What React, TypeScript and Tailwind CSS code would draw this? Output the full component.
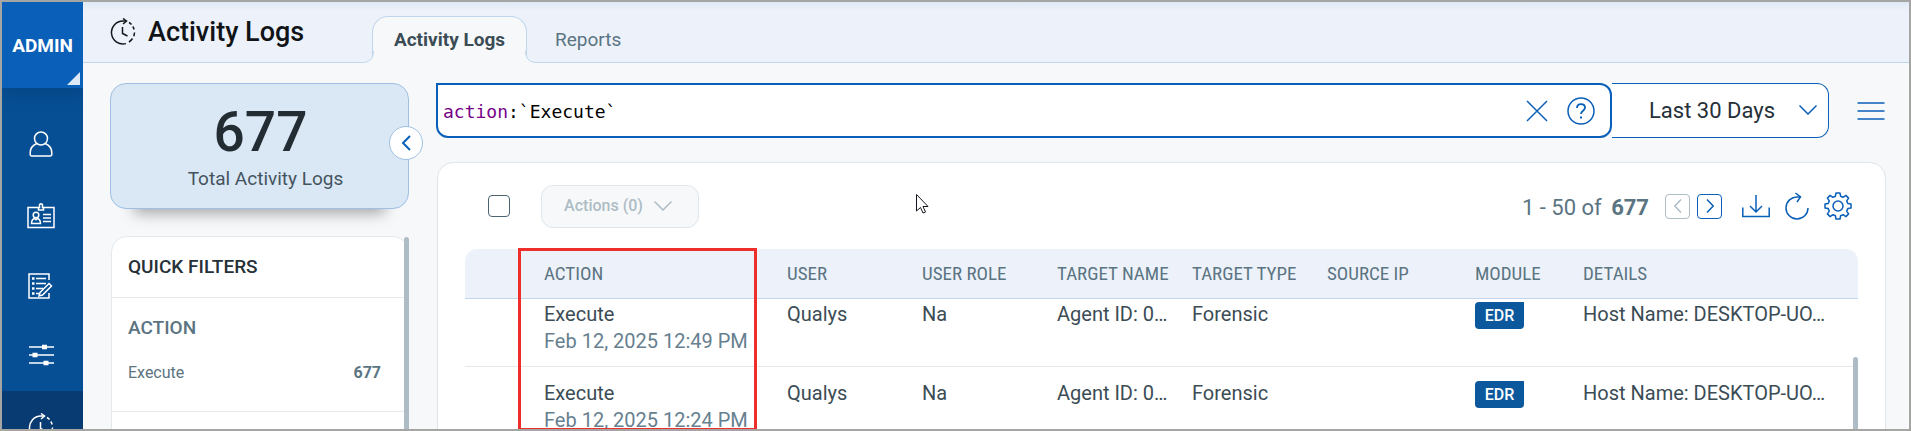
import React, { useState } from 'react';

const columns = [
  { name: '', width: 'w-[79px]' },
  { name: 'ACTION', width: 'w-[243px]' },
  { name: 'USER', width: 'w-[135px]' },
  { name: 'USER ROLE', width: 'w-[135px]' },
  { name: 'TARGET NAME', width: 'w-[135px]' },
  { name: 'TARGET TYPE', width: 'w-[135px]' },
  { name: 'SOURCE IP', width: 'w-[148px]' },
  { name: 'MODULE', width: 'w-[108px]' },
  { name: 'DETAILS', width: '' },
];

const logs = [
  { id: 1, action: 'Execute', date: 'Feb 12, 2025 12:49 PM', user: 'Qualys', role: 'Na', target: 'Agent ID: 0…', type: 'Forensic', module: 'EDR', details: 'Host Name: DESKTOP-UO…' },
  { id: 2, action: 'Execute', date: 'Feb 12, 2025 12:24 PM', user: 'Qualys', role: 'Na', target: 'Agent ID: 0…', type: 'Forensic', module: 'EDR', details: 'Host Name: DESKTOP-UO…' },
];

const Icon: React.FC<{ className?: string; children: React.ReactNode }> = ({ className = 'size-7', children }) => (
  <svg viewBox="0 0 28 28" fill="none" stroke="currentColor" strokeWidth="1.5" className={`shrink-0 ${className}`} aria-hidden="true">
    {children}
  </svg>
);

const HistoryIcon: React.FC<{ className?: string }> = ({ className }) => (
  <Icon className={className}>
    <path d="M17 3H14A11.5 11.5 0 1 0 17 25.6" />
    <path d="M14 .5 17.500 3 14 6" />
    <path d="M20 4.500a11.500 11.500 0 0 1 2.500 2M23.800 8.500a11.500 11.500 0 0 1 1.300 3M25.500 14.500a11.500 11.500 0 0 1-.8 3.800M23.500 20.500a11.500 11.500 0 0 1-3.500 3.500" />
    <path d="M13.500 9v6.500l5 2.500" />
  </Icon>
);

const Sidebar = () => (
  <nav aria-label="Main" className="flex w-[81px] shrink-0 flex-col overflow-hidden bg-[#074f94] text-white">
    <button className="relative flex h-[86px] w-full shrink-0 items-center justify-center bg-[#0a5fb8] pt-0.5 text-[19px] font-bold shadow-[0_6px_16px_rgba(0,30,70,0.2)]">
      ADMIN
      <svg viewBox="0 0 13 13" className="absolute right-[3px] bottom-[3px] size-[13px] fill-[#dce8f5]" aria-hidden="true">
        <path d="M13 0v13H0z" />
      </svg>
    </button>
    <a href="#users" aria-label="Users" className="mt-5 flex h-[72px] shrink-0 items-center justify-center pr-1">
      <Icon>
        <circle cx="14" cy="8.500" r="6.500" />
        <path d="M9.800 13.500C5.500 15.200 3.200 19 3.200 23v1.500c0 .9.500 1.400 1.300 1.400h19c.8 0 1.300-.5 1.300-1.400V23c0-4-2.300-7.800-6.600-9.500" />
      </Icon>
    </a>
    <a href="#roles" aria-label="Roles" className="flex h-[72px] shrink-0 items-center justify-center pr-1">
      <Icon>
        <path d="M11 5.500H1v20h26v-20H17" />
        <path d="M11.500 8V5.500h1V4a1.600 1.600 0 1 1 3 0v1.500h1V8z" />
        <circle cx="9" cy="13" r="2.800" />
        <path d="M4.500 21.500c0-3 1.500-4.500 3-5l1.500 1.200 1.500-1.200c1.500.5 3 2 3 5zM16 12.500h8M16 16h8M16 19.500h8" />
      </Icon>
    </a>
    <a href="#tasks" aria-label="Tasks" className="flex h-[68px] shrink-0 items-center justify-center pr-1">
      <Icon>
        <path d="M22 8V2H2v24h20v-5" />
        <path d="M9 6.500h10M9 11.500h10M9 16.500h7M9 21.500h3" />
        <path d="M5 6.500h2.500M5 11.500h2.500M5 16.500h2.500M5 21.500h2.500" strokeWidth="2.500" />
        <path d="M13 20.500 22 11.500l2.500 2.500-9 9-3.500 1z" />
      </Icon>
    </a>
    <a href="#settings" aria-label="Settings" className="flex h-[70px] shrink-0 items-center justify-center pr-1">
      <Icon>
        <path d="M2 6h25M2 14h25M2 22h25" />
        <path d="M15 6h5M5.500 14h5M16.500 22h5" strokeWidth="4.500" />
      </Icon>
    </a>
    <a href="#activity" aria-label="Activity logs" className="mt-px flex h-[72px] shrink-0 items-center justify-center bg-[#093b73] pr-1">
      <HistoryIcon />
    </a>
  </nav>
);

const Header = () => (
  <header className="flex h-[61px] shrink-0 items-stretch border-b border-[#bfd6ec] bg-linear-to-b from-[#dfeaf5] to-[#edf2fa] to-15% pl-[26px]">
    <div className="flex w-[263px] items-center gap-[11px]">
      <HistoryIcon className="size-7 text-[#15181b]" />
      <h1 className="text-[27px] font-medium text-[#101417]">Activity Logs</h1>
    </div>
    <div role="tablist" className="flex pt-3.5">
      <button role="tab" aria-selected="true" className="relative -mb-px w-[155px] rounded-t-2xl border border-b-0 border-[#bfd6ec] bg-[#f7f8fa] text-[19px] font-bold text-[#3b4c55]">
        Activity Logs
        <svg viewBox="0 0 12 12" className="absolute -left-[11px] bottom-0 size-3" aria-hidden="true">
          <path d="M0 11.500C7 11.500 11.500 8 11.500 0H12v12H0z" fill="#f7f8fa" />
          <path d="M0 11.500C7 11.500 11.500 8 11.500 0" fill="none" stroke="#bfd6ec" />
        </svg>
        <svg viewBox="0 0 12 12" className="absolute -right-[11px] bottom-0 size-3" aria-hidden="true">
          <path d="M12 11.500C5 11.500 .5 8 .5 0H0v12h12z" fill="#f7f8fa" />
          <path d="M12 11.500C5 11.500 .5 8 .5 0" fill="none" stroke="#bfd6ec" />
        </svg>
      </button>
      <button role="tab" aria-selected="false" className="px-7 pt-0.5 text-[19px] text-[#5b7482]">Reports</button>
    </div>
  </header>
);

const Summary = () => (
  <aside className="flex w-[299px] shrink-0 flex-col">
    <div className="relative flex h-[126px] shrink-0 flex-col items-center rounded-2xl border border-[#9fc0e3] bg-[#dae8f5] pt-4 shadow-[0_28px_14px_-24px_rgba(0,0,0,0.35)]">
      <strong className="pl-0.5 text-[55px] leading-[64px] font-medium text-[#232c33]">677</strong>
      <span className="pl-3 text-[19px] leading-[29px] text-[#44545e]">Total Activity Logs</span>
      <button aria-label="Collapse panel" className="absolute top-[42px] -right-[15px] flex size-[34px] items-center justify-center rounded-full border border-[#9fc0e3] bg-white text-[#0a5fb8]">
        <svg viewBox="0 0 10 16" className="h-4 w-2.5" fill="none" stroke="currentColor" strokeWidth="2" aria-hidden="true">
          <path d="M9 1 2 8l7 7" />
        </svg>
      </button>
    </div>
    <section className="mt-[27px] ml-px flex h-60 shrink-0 rounded-t-2xl border border-[#e3e9ed] bg-white">
      <div className="flex-1">
        <h2 className="flex h-[61px] items-center border-b border-[#e3e9ed] px-4 text-[19px] font-medium text-[#263038]">QUICK FILTERS</h2>
        <div className="h-[114px] border-b border-[#e3e9ed] pr-[23px] pl-4">
          <h3 className="pt-4 text-[19px] leading-7 font-medium text-[#5b7482]">ACTION</h3>
          <button className="mt-[17px] flex w-full justify-between text-base leading-7 text-[#5b7482]">
            <span>Execute</span>
            <span className="font-bold">677</span>
          </button>
        </div>
      </div>
      <div className="-mr-px w-[5px] rounded-t bg-[#aebcc5]" />
    </section>
  </aside>
);

const SearchBar = () => {
  const [query, setQuery] = useState('action:`Execute`');
  const [field, ...rest] = query.split(':');

  return (
    <div className="flex h-[55px] shrink-0 items-stretch pr-px">
      <div className="flex flex-1 items-center gap-[19px] rounded-r-xl rounded-bl-xl border-2 border-[#0a5fb8] bg-white pr-[15px] pl-[5px] text-[#0a5fb8]">
        <div className="grid flex-1 pt-0.5 font-['DejaVu_Sans_Mono',monospace] text-[18px] leading-7">
          <div aria-hidden="true" className="col-start-1 row-start-1 whitespace-pre text-black">
            <span className="text-[#770088]">{field}</span>{rest.length > 0 && ':' + rest.join(':')}
          </div>
          <input
            aria-label="Search activity logs"
            value={query}
            onChange={(e) => setQuery(e.target.value)}
            className="col-start-1 row-start-1 bg-transparent text-transparent caret-black outline-none"
          />
        </div>
        <button aria-label="Clear search" onClick={() => setQuery('')}>
          <svg viewBox="0 0 22 22" className="size-[22px]" fill="none" stroke="currentColor" strokeWidth="1.5" aria-hidden="true">
            <path d="M1 1l20 20M21 1 1 21" />
          </svg>
        </button>
        <button aria-label="Search help">
          <Icon>
            <circle cx="14" cy="14" r="13" />
            <path d="M10 11c0-2.500 1.700-3.800 4-3.800s4 1.300 4 3.500c0 3-4 3-4 6.300" strokeWidth="1.800" />
            <path d="M14 19.500v2" strokeWidth="2" />
          </Icon>
        </button>
      </div>
      <div className="relative w-[217px] rounded-r-xl border border-l-0 border-[#0a5fb8] bg-white">
        <select aria-label="Date range" className="h-full w-full appearance-none bg-transparent pl-[37px] text-[22px] text-[#263038] outline-none">
          <option>Last 30 Days</option>
        </select>
        <svg viewBox="0 0 18 10" className="pointer-events-none absolute top-[21px] right-[11px] h-2.5 w-[18px] text-[#0a5fb8]" fill="none" stroke="currentColor" strokeWidth="1.500" aria-hidden="true">
          <path d="M.5.5 9 9 17.500.5" />
        </svg>
      </div>
      <button aria-label="Menu" className="ml-7 text-[#0a5fb8]">
        <Icon>
          <path d="M.5 6h27M.5 14h27M.5 22h27" />
        </Icon>
      </button>
    </div>
  );
};

const Toolbar = () => (
  <div className="flex h-[86px] shrink-0 items-center pr-1.5 pl-[23px] text-[#0a5fb8]">
    <input type="checkbox" aria-label="Select all" className="size-[22px] appearance-none rounded border border-[#4d6573] bg-white" />
    <button disabled className="ml-[31px] flex h-[43px] w-[158px] items-center justify-center gap-[11px] rounded-xl border border-[#dfe5e9] bg-[#f6f8fa] pr-1 text-base font-medium text-[#aebcc5]">
      Actions (0)
      <svg viewBox="0 0 18 10" className="h-2.5 w-[18px]" fill="none" stroke="currentColor" strokeWidth="1.500" aria-hidden="true">
        <path d="M.5.5 9 9 17.500.5" />
      </svg>
    </button>
    <div className="ml-auto pt-0.5 text-[22px] text-[#5b7482]">
      1 - 50 of <strong className="ml-1 font-bold">677</strong>
    </div>
    <button aria-label="Previous page" disabled className="ml-4 flex size-[25px] items-center justify-center rounded-sm border border-[#aebcc5] text-[#aebcc5]">
      <svg viewBox="0 0 8 14" className="h-3.5 w-2" fill="none" stroke="currentColor" strokeWidth="1.500" aria-hidden="true">
        <path d="M7 .5.8 7 7 13.500" />
      </svg>
    </button>
    <button aria-label="Next page" className="ml-[7px] flex size-[25px] items-center justify-center rounded-sm border border-[#0a5fb8]">
      <svg viewBox="0 0 8 14" className="h-3.5 w-2" fill="none" stroke="currentColor" strokeWidth="1.500" aria-hidden="true">
        <path d="M1 .5 7.200 7 1 13.500" />
      </svg>
    </button>
    <div className="ml-5 flex gap-[13px]">
      <button aria-label="Download">
        <Icon>
          <path d="M.8 15.500V24.500h26.400V15.500M14 3v17M8 14l6 6 6-6" />
        </Icon>
      </button>
      <button aria-label="Refresh">
        <Icon>
          <path d="M17.500 5H14.500A11 11 0 1 0 25 16" />
          <path d="M12.500 1 17.500 5l-3.500 5" />
        </Icon>
      </button>
      <button aria-label="Settings">
        <Icon>
          <circle cx="14" cy="14" r="5" />
          <path d="M12 1h4l.6 3.200 2.500 1.100 2.800-1.900 2.700 2.700-1.900 2.800 1.100 2.500 3.200.6v4l-3.200.6-1.100 2.500 1.900 2.800-2.700 2.700-2.800-1.900-2.500 1.100L16 27h-4l-.6-3.200-2.500-1.100-2.800 1.900-2.700-2.700 1.900-2.800-1.100-2.500L1 16v-4l3.200-.6 1.100-2.500-1.900-2.800 2.700-2.700 2.800 1.900 2.500-1.100z" strokeLinejoin="round" />
        </Icon>
      </button>
    </div>
  </div>
);

const LogTable = () => (
  <div className="relative">
    <table className="w-full table-fixed border-separate border-spacing-0 text-left">
      <thead>
        <tr className="text-[19px] text-[#5b7482]">
          {columns.map((col, i) => (
            <th key={i} scope="col" className={`h-[50px] border-b border-[#bfd6ec] bg-[#edf2fa] pt-0.5 font-['Roboto_Condensed',Roboto,sans-serif] font-normal whitespace-nowrap first:rounded-tl-xl last:rounded-tr-xl ${col.width}`}>
              {col.name}
            </th>
          ))}
        </tr>
      </thead>
      <tbody>
        {logs.map((log, i) => {
          const cell = `border-b border-[#e3e9ed] pb-[11px] align-top whitespace-nowrap ${i === 0 ? 'pt-0.5' : 'pt-[13px]'}`;
          return (
            <tr key={log.id} className="text-[20px] leading-[27px] text-[#3b4c55]">
              <td className={cell} />
              <td className={cell}>
                <div>{log.action}</div>
                <div className="text-[#66808f]">{log.date}</div>
              </td>
              <td className={cell}>{log.user}</td>
              <td className={cell}>{log.role}</td>
              <td className={cell}>{log.target}</td>
              <td className={cell}>{log.type}</td>
              <td className={cell} />
              <td className={cell}>
                <span className="mt-px block w-[49px] rounded-l-sm rounded-br-sm bg-[#0b589c] text-center text-base leading-[27px] font-medium text-white">{log.module}</span>
              </td>
              <td className={cell}>{log.details}</td>
            </tr>
          );
        })}
      </tbody>
    </table>
    {/* scroll thumb */}
    <div className="absolute top-[108px] right-0 bottom-0 w-[5px] rounded-t bg-[#aebcc5]" />
    {/* highlight around the action column */}
    <div className="pointer-events-none absolute -top-px left-[53px] h-[183px] w-[239px] border-3 border-[#ee2e2a]" />
  </div>
);

export default function App() {
  return (
    <div className="relative flex h-screen overflow-hidden border-2 border-[#a5a5a3] bg-[#f7f8fa] font-['Roboto',sans-serif]">
      <Sidebar />
      <div className="flex min-w-0 flex-1 flex-col">
        <Header />
        <div className="flex min-h-0 flex-1 gap-[27px] pt-5 pr-[23px] pl-[27px]">
          <Summary />
          <main className="flex min-w-0 flex-1 flex-col">
            <SearchBar />
            <section className="mt-6 ml-px shrink-0 rounded-t-2xl border border-[#dfe5e9] bg-white px-[27px]">
              <Toolbar />
              <LogTable />
            </section>
          </main>
        </div>
      </div>
      <svg viewBox="0 0 13 20" className="pointer-events-none absolute top-[192px] left-[914px] h-5 w-[13px]" fill="white" stroke="#15151f" aria-hidden="true">
        <path d="M.5.5v16.500l4-3.500 2.500 5.500 2.500-1-2.500-5.500h5z" />
      </svg>
    </div>
  );
}
